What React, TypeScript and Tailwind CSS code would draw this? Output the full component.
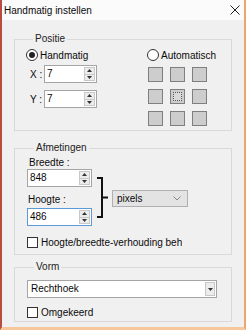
import React from 'react';

function Radio({ checked, label }: { checked?: boolean; label: string }) {
  return (
    <div className="flex h-[14px] items-center gap-[2px]">
      <span className="flex h-[12px] w-[12px] items-center justify-center rounded-full border border-[#333] bg-white">
        {checked && <span className="h-[6px] w-[6px] rounded-full bg-[#222]" />}
      </span>
      <span>{label}</span>
    </div>
  );
}

function Check({ label, width }: { label: string; width?: string }) {
  return (
    <div className={`flex h-[14px] items-center gap-[3px] overflow-hidden whitespace-nowrap ${width ?? ''}`}>
      <span className="h-[11px] w-[11px] shrink-0 border border-[#333] bg-white" />
      <span>{label}</span>
    </div>
  );
}

function Spin() {
  return (
    <div className="my-[1px] mr-[1px] flex w-[11px] flex-col border border-[#c8c8c8] bg-[#ececec]">
      <div className="flex flex-1 items-center justify-center border-b border-[#c8c8c8]">
        <svg width="5" height="3" viewBox="0 0 5 3">
          <path d="M0 3 L2.5 0 L5 3 Z" fill="#333" />
        </svg>
      </div>
      <div className="flex flex-1 items-center justify-center">
        <svg width="5" height="3" viewBox="0 0 5 3">
          <path d="M0 0 L2.5 3 L5 0 Z" fill="#333" />
        </svg>
      </div>
    </div>
  );
}

function NumberBox({ value, width, focused }: { value: string; width: string; focused?: boolean }) {
  return (
    <div
      className={`flex h-[18px] ${width} border bg-white ${focused ? 'border-[#5a9bd6]' : 'border-[#a5a5a5]'}`}
    >
      <span className="flex-1 pl-[2px] leading-[16px]">{value}</span>
      <Spin />
    </div>
  );
}

function Square({ active }: { active?: boolean }) {
  return (
    <div className="flex h-[15px] w-[15px] items-center justify-center border border-[#7f7f7f] bg-[#cdcdcd]">
      {active && <div className="h-[9px] w-[9px] border border-dotted border-[#555] bg-[#d9d9d9]" />}
    </div>
  );
}

export default function App() {
  return (
    <div className="flex h-[330px] w-[246px] flex-col overflow-hidden border-b-[3px] border-l-2 border-r-2 border-b-[#f6c69c] border-l-[#b84c3e] border-r-[#f0a46a] bg-[#f0f0f0] font-['Liberation_Sans',Arial,sans-serif] text-[10px] text-[#0a0a0a]">
      <div className="flex h-[20px] shrink-0 items-center justify-between bg-[#fbfbfb] pl-[2px] pr-[4px]">
        <span>Handmatig instellen</span>
        <svg width="10" height="10" viewBox="0 0 10 10">
          <path d="M0.5 0.5 L9.5 9.5 M9.5 0.5 L0.5 9.5" stroke="#222" strokeWidth="1" />
        </svg>
      </div>

      <div className="flex flex-col px-[12px]">
        <fieldset className="mt-[12px] border border-[#d9d9d9] pb-[4px] pl-[11px]">
          <legend className="ml-[7px] px-[2px] leading-[14px] text-[#222]">Positie</legend>
          <div className="mt-[2px] flex">
            <div className="w-[121px]">
              <Radio checked label="Handmatig" />
            </div>
            <Radio label="Automatisch" />
          </div>
          <div className="flex">
            <div className="flex w-[121px] flex-col">
              <div className="mt-[3px] flex items-center">
                <span className="w-[18px] pl-[4px]">X :</span>
                <NumberBox value="7" width="w-[53px]" />
              </div>
              <div className="mt-[7px] flex items-center">
                <span className="w-[18px] pl-[4px]">Y :</span>
                <NumberBox value="7" width="w-[53px]" />
              </div>
            </div>
            <div className="mt-[5px] ml-[1px] grid grid-cols-[15px_15px_15px] gap-x-[7px] gap-y-[7px]">
              <Square />
              <Square />
              <Square />
              <Square />
              <Square active />
              <Square />
              <Square />
              <Square />
              <Square />
            </div>
          </div>
        </fieldset>

        <fieldset className="mt-[10px] border border-[#d9d9d9] pb-[5px] pl-[12px]">
          <legend className="ml-[7px] px-[2px] leading-[14px] text-[#222]">Afmetingen</legend>
          <div className="mt-[1px] flex items-start">
            <div className="flex w-[65px] flex-col">
              <span className="h-[13px] pl-[2px] leading-[14px]">Breedte :</span>
              <NumberBox value="848" width="w-[65px]" />
              <span className="mt-[6px] h-[15px] pl-[1px] leading-[14px]">Hoogte :</span>
              <NumberBox value="486" width="w-[65px]" focused />
            </div>
            <svg className="ml-[5px] mt-[21px]" width="12" height="41" viewBox="0 0 12 41">
              <path d="M0 1 H5 V40 H0 M5 20.5 H11" stroke="#111" strokeWidth="2" fill="none" />
            </svg>
            <div className="ml-[3px] mt-[34px] flex h-[17px] w-[76px] items-center justify-between border border-[#b0b0b0] bg-[#e3e3e3] pl-[4px] pr-[6px]">
              <span>pixels</span>
              <svg width="8" height="5" viewBox="0 0 8 5">
                <path d="M0.5 0.5 L4 4 L7.5 0.5" stroke="#888" strokeWidth="1" fill="none" />
              </svg>
            </div>
          </div>
          <div className="mt-[9px]">
            <Check label="Hoogte/breedte-verhouding behouden" width="w-[155px]" />
          </div>
        </fieldset>

        <fieldset className="mt-[5px] border border-[#d9d9d9] pb-[2px] pl-[12px]">
          <legend className="ml-[7px] px-[2px] leading-[14px] text-[#222]">Vorm</legend>
          <div className="mt-[6px] flex h-[18px] w-[190px] border border-[#a5a5a5] bg-white">
            <span className="flex-1 pl-[3px] leading-[16px]">Rechthoek</span>
            <div className="my-[1px] mr-[1px] flex w-[10px] items-center justify-center border border-[#c8c8c8] bg-[#ececec]">
              <svg width="5" height="3" viewBox="0 0 5 3">
                <path d="M0 0 L2.5 3 L5 0 Z" fill="#333" />
              </svg>
            </div>
          </div>
          <div className="mt-[7px]">
            <Check label="Omgekeerd" />
          </div>
        </fieldset>
      </div>
    </div>
  );
}
